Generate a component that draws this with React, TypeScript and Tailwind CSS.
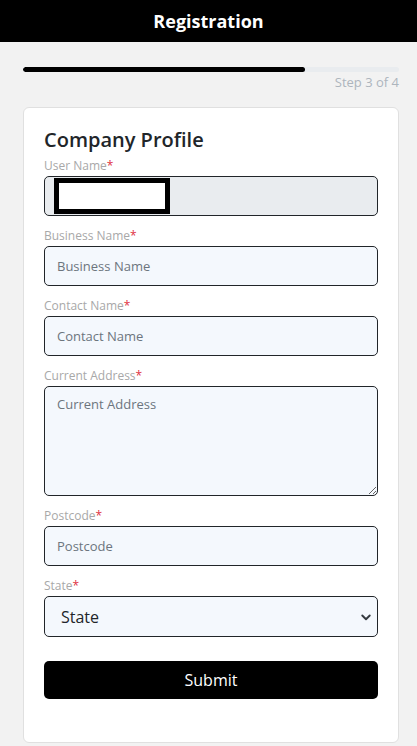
import React from 'react';

const font = { fontFamily: '"Open Sans", "Noto Sans", sans-serif' };

function Label({ text }: { text: string }) {
  return (
    <label className="block text-[12px] leading-[16px] text-[#a8a8a8] mb-[2px]">
      {text}
      <span className="text-[#e0303f]">*</span>
    </label>
  );
}

function Field({ label, placeholder }: { label: string; placeholder: string }) {
  return (
    <div className="mt-[12px]">
      <Label text={label} />
      <input
        placeholder={placeholder}
        className="w-full h-[40px] rounded-[5px] border border-[#212529] bg-[#f4f8fd] px-[12px] text-[13px] text-[#212529] placeholder:text-[#6c757d] outline-none"
      />
    </div>
  );
}

export default function App() {
  return (
    <div className="min-h-[746px] bg-[#f2f2f2]" style={font}>
      {/* Header */}
      <header className="h-[42px] bg-black flex items-center justify-center">
        <h1 className="text-white text-[18px] font-bold leading-none">Registration</h1>
      </header>

      <div className="pl-[23px] pr-[18px] pt-[25px]">
        {/* Progress */}
        <div className="h-[5px] w-full rounded-full bg-[#e9ecef] overflow-hidden">
          <div className="h-full bg-black rounded-full" style={{ width: '75%' }} />
        </div>
        <p className="text-right text-[13px] leading-[18px] text-[#adb5bd] mt-[1px]">Step 3 of 4</p>

        {/* Card */}
        <div className="mt-[16px] bg-white border border-[#e0e0e0] rounded-[6px] px-[20px] pt-[20px] pb-[43px]">
          <h2 className="text-[20px] leading-[24px] font-semibold text-[#212529] mb-[-6px]">Company Profile</h2>

          <div className="mt-[12px]">
            <Label text="User Name" />
            <div className="h-[40px] rounded-[5px] border border-[#212529] bg-[#e9ecef] flex items-center pl-[9px]">
              <div className="w-[116px] h-[36px] border-[5px] border-black bg-white" />
            </div>
          </div>

          <Field label="Business Name" placeholder="Business Name" />
          <Field label="Contact Name" placeholder="Contact Name" />

          <div className="mt-[12px]">
            <Label text="Current Address" />
            <textarea
              placeholder="Current Address"
              className="block w-full h-[110px] rounded-[5px] border border-[#212529] bg-[#f4f8fd] px-[12px] py-[8px] text-[13px] text-[#212529] placeholder:text-[#6c757d] outline-none resize-y"
            />
          </div>

          <Field label="Postcode" placeholder="Postcode" />

          <div className="mt-[12px]">
            <Label text="State" />
            <div className="relative">
              <select
                defaultValue=""
                className="w-full h-[41px] appearance-none rounded-[5px] border border-[#212529] bg-[#f4f8fd] pl-[16px] pr-[32px] text-[16px] text-[#212529] outline-none"
              >
                <option value="">State</option>
              </select>
              <svg
                className="pointer-events-none absolute right-[6px] top-1/2 -translate-y-1/2"
                width="12"
                height="12"
                viewBox="0 0 16 16"
                fill="none"
                stroke="#343a40"
                strokeWidth="2.5"
                strokeLinecap="round"
                strokeLinejoin="round"
              >
                <path d="M3 6l5 5 5-5" />
              </svg>
            </div>
          </div>

          <button className="mt-[24px] w-full h-[38px] rounded-[5px] bg-black text-white text-[16px]">
            Submit
          </button>
        </div>
      </div>
    </div>
  );
}
